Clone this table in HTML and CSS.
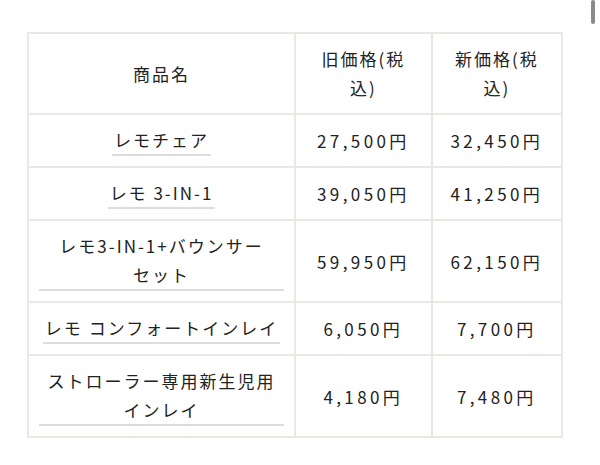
FILE: index.html
```html
<!DOCTYPE html>
<html lang="ja">
<head>
<meta charset="utf-8">
<title>価格表</title>
<link rel="stylesheet" href="styles.css">
</head>
<body>
<div class="page">
  <table class="price-table">
    <colgroup>
      <col class="col-name">
      <col class="col-old">
      <col class="col-new">
    </colgroup>
    <thead>
      <tr>
        <th>商品名</th>
        <th>旧価格(税込)</th>
        <th>新価格(税込)</th>
      </tr>
    </thead>
    <tbody>
      <tr>
        <td class="name"><a class="item-link">レモチェア</a></td>
        <td class="price">27,500円</td>
        <td class="price">32,450円</td>
      </tr>
      <tr>
        <td class="name"><a class="item-link">レモ 3-IN-1</a></td>
        <td class="price">39,050円</td>
        <td class="price">41,250円</td>
      </tr>
      <tr>
        <td class="name"><a class="item-link">レモ3-IN-1+バウンサーセット</a></td>
        <td class="price">59,950円</td>
        <td class="price">62,150円</td>
      </tr>
      <tr>
        <td class="name"><a class="item-link">レモ コンフォートインレイ</a></td>
        <td class="price">6,050円</td>
        <td class="price">7,700円</td>
      </tr>
      <tr>
        <td class="name"><a class="item-link">ストローラー専用新生児用インレイ</a></td>
        <td class="price">4,180円</td>
        <td class="price">7,480円</td>
      </tr>
    </tbody>
  </table>
  <div class="scroll-indicator"></div>
</div>
</body>
</html>
```
FILE: styles.css
```css
html, body {
  margin: 0;
  padding: 0;
  background: #ffffff;
}

body {
  font-family: "Noto Sans CJK JP", "Noto Sans", sans-serif;
  color: #222222;
}

.page {
  position: relative;
  box-sizing: border-box;
  height: 465px;
  padding: 32px 0 0 27px;
}

.price-table {
  border-collapse: collapse;
  table-layout: fixed;
  width: 536px;
}

.col-name { width: 50%; }
.col-old { width: 25.6%; }
.col-new { width: 24.4%; }

.price-table th,
.price-table td {
  border: 2px solid #e9e9e4;
  padding: 10px;
  text-align: center;
  vertical-align: middle;
  font-size: 17px;
  line-height: 29px;
  letter-spacing: 2px;
  font-weight: 400;
  line-break: strict;
}

.price-table th {
  padding: 10px 15px 11px;
}

.price-table td.price {
  letter-spacing: 3.4px;
}

.item-link {
  display: inline-block;
  padding: 0 2px;
  border-bottom: 2px solid #dddddd;
  color: inherit;
  text-decoration: none;
}

.scroll-indicator {
  position: absolute;
  top: 0;
  right: 5px;
  width: 4px;
  height: 24px;
  border-radius: 2px;
  background: #8a8a8a;
}
```
